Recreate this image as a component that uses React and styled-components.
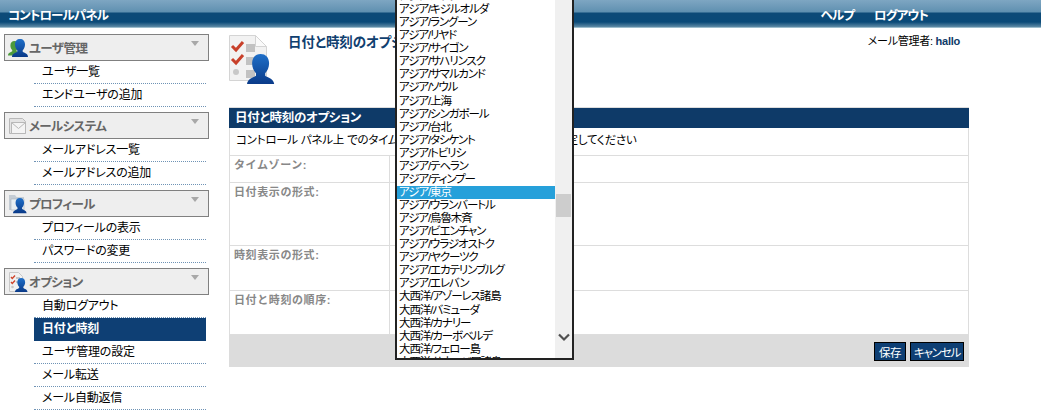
import React from 'react';
import styled, { createGlobalStyle } from 'styled-components';

const GlobalStyle = createGlobalStyle`
  html, body {
    margin: 0;
    padding: 0;
    background: #fff;
    overflow: hidden;
  }
  body {
    font-family: "Liberation Sans", "Noto Sans CJK JP", sans-serif;
    font-size: 12px;
    color: #000;
  }
`

const Page = styled.div`
  position: relative;
  width: 1041px;
  height: 416px;
  overflow: hidden;
`

const TopBar = styled.header`
  height: 28px;
  display: flex;
  justify-content: space-between;
  align-items: center;
  padding: 0 113px 0 8px;
  color: #fff;
  font-weight: bold;
  font-size: 12.5px;
  letter-spacing: -0.9px;
  font-feature-settings: "palt";
  background: linear-gradient(to bottom, #7ea6c2 0, #5f90b0 12px, #0c4a78 13px, #0a4a78 22px, #5f8ba6 27px, #d8eef2 28px);
`

const TopNav = styled.nav`
  display: flex;
  gap: 20px;
`

const Body = styled.div`
  display: flex;
  align-items: flex-start;
`

const Sidebar = styled.aside`
  width: 205px;
  margin: 6px 0 0 4px;
  display: flex;
  flex-direction: column;
  gap: 5px;
`

const GroupHead = styled.div`
  height: 25px;
  border: 1px solid #808080;
  background: #eee;
  display: flex;
  align-items: center;
  gap: 1px;
  padding: 0 8px 0 3px;
  color: #666;
  font-weight: bold;
  font-size: 12.5px;
  letter-spacing: -0.6px;
  font-feature-settings: "palt";
`

const GroupName = styled.span`
  flex: 1;
`

const Caret = styled.span`
  width: 0;
  height: 0;
  margin: -9px 1px 0 0;
  border-left: 4px solid transparent;
  border-right: 4px solid transparent;
  border-top: 5px solid #a8a8a8;
`

const MenuList = styled.ul`
  list-style: none;
  margin: 0 0 0 30px;
  padding: 0;
  width: 172px;
`

const MenuItem = styled.li`
  height: 22px;
  line-height: 22px;
  padding-left: 8px;
  font-size: 12px;
  letter-spacing: -0.2px;
  font-feature-settings: "palt";
  border-bottom: 1px dotted ${p => (p.$active ? '#0e3f74' : '#6f93b5')};
  ${p => p.$active && `
    background: #0e3f74;
    color: #fff;
    font-weight: bold;
  `}
`

const Main = styled.main`
  width: 740px;
  margin-left: 20px;
`

const TitleRow = styled.div`
  height: 79px;
  display: flex;
  padding-top: 6px;
  box-sizing: border-box;
`

const TitleIcon = styled.svg`
  width: 50px;
  height: 50px;
  flex: none;
`

const Title = styled.h1`
  flex: 1;
  margin: 0 0 0 9px;
  color: #10406f;
  font-size: 13.5px;
  line-height: 17px;
  font-weight: bold;
  letter-spacing: -0.1px;
  font-feature-settings: "palt";
`

const AdminInfo = styled.div`
  margin: 0 9px 0 0;
  font-size: 11px;
  line-height: 14px;
  letter-spacing: -0.25px;
  font-feature-settings: "palt";
  b {
    color: #0e3a68;
  }
`

const Panel = styled.section`
  border-top: 1px solid #ddd;
`

const PanelHead = styled.h2`
  margin: 0;
  height: 20px;
  line-height: 20px;
  padding-left: 6px;
  background: #0e3a68;
  color: #fff;
  font-size: 12.5px;
  font-weight: bold;
  letter-spacing: -0.3px;
  font-feature-settings: "palt";
`

const PanelNote = styled.p`
  margin: 0;
  height: 27px;
  line-height: 25px;
  padding-left: 6px;
  font-size: 11.5px;
  letter-spacing: -0.23px;
  font-feature-settings: "palt";
  border: solid #ddd;
  border-width: 0 1px 1px;
`

const FormRow = styled.div`
  display: grid;
  grid-template-columns: 160px 1fr;
  height: ${p => p.$height}px;
  box-sizing: border-box;
  border: solid #ddd;
  border-width: 0 1px 1px;
`

const FormLabel = styled.label`
  padding: 2px 0 0 4px;
  color: #888;
  font-size: 11px;
  line-height: 14px;
  font-weight: bold;
  letter-spacing: 0.6px;
  border-right: 1px solid #ddd;
`

const FormFooter = styled.div`
  height: 32px;
  background: #dcdcdc;
  display: flex;
  justify-content: flex-end;
  align-items: center;
  gap: 4px;
  padding-right: 5px;
`

const SubmitButton = styled.button`
  width: ${p => p.$width}px;
  height: 19px;
  padding: 0;
  margin-top: 1px;
  border: 1px solid #000;
  background: #0e3f74;
  color: #fff;
  font: 11.5px "Liberation Sans", "Noto Sans CJK JP", sans-serif;
  font-feature-settings: "palt";
  letter-spacing: ${p => p.$tracking}px;
  box-sizing: border-box;
`

const ZoneDropdown = styled.div`
  position: absolute;
  left: 395px;
  top: -14px;
  width: 179px;
  height: 374px;
  box-sizing: border-box;
  border: 2px solid #222;
  background: #fff;
  display: flex;
  overflow: hidden;
`

const ZoneList = styled.ul`
  list-style: none;
  margin: 2px 0 0;
  padding: 0;
  flex: 1;
  overflow: hidden;
`

const ZoneOption = styled.li`
  height: 13.07px;
  line-height: 13px;
  padding-left: 2px;
  font-size: 11.5px;
  letter-spacing: -1.1px;
  white-space: nowrap;
  font-feature-settings: "palt";
  ${p => p.$selected && `
    background: #26a0da;
    color: #fff;
  `}
`

const ScrollTrack = styled.div`
  position: relative;
  width: 17px;
  flex: none;
  background: #f0f0f0;
`

const ScrollThumb = styled.div`
  position: absolute;
  left: 1px;
  right: 1px;
  top: 206px;
  height: 23px;
  background: #cdcdcd;
`

const ScrollArrow = styled.svg`
  position: absolute;
  left: 3px;
  bottom: 16px;
  width: 12px;
  height: 9px;
`

const Person = ({ x = 0, y = 0, s = 1, fill = 'url(#personBlue)' }) => (
  <g transform={`translate(${x} ${y}) scale(${s})`} fill={fill}>
    <path d="M8 0c3 0 5 2 5 5.500 0 2.500-1 4.500-2.300 5.800v1.500c1.500 1.200 5.300 1.700 5.300 5.200H0c0-3.500 3.800-4 5.300-5.200v-1.500C4 10 3 8 3 5.500 3 2 5 0 8 0z" />
  </g>
)

const IconDefs = () => (
  <defs>
    <linearGradient id="personBlue" x1="0" y1="0" x2="0" y2="1">
      <stop offset="0" stopColor="#1f6fc8" />
      <stop offset="1" stopColor="#0a3a88" />
    </linearGradient>
  </defs>
)

const SmallIcon = styled.svg`
  width: 20px;
  height: 20px;
  flex: none;
`

const UsersIcon = () => (
  <SmallIcon viewBox="0 0 20 20">
    <IconDefs />
    <Person x={0} y={3} s={0.8} fill="#4d9a3c" />
    <Person x={4} y={1} s={1} />
  </SmallIcon>
)

const MailIcon = () => (
  <SmallIcon viewBox="0 0 20 20" fill="#f4f4f4" stroke="#b8b8b8">
    <path d="M1.500 2.500h13l3 3v12h-16z" fill="#e4e4e4" />
    <path d="M3.500 6.500h14v11h-14z" />
    <path d="M3.500 6.500l7 6 7-6" fill="none" />
  </SmallIcon>
)

const ProfileIcon = () => (
  <SmallIcon viewBox="0 0 20 20">
    <IconDefs />
    <path d="M1 1h6l1.500 2H16v13H1z" fill="#c4ccd4" />
    <path d="M3 5h13v11H3z" fill="#e8eef2" stroke="#a8b4bc" strokeWidth=".6" />
    <Person x={5} y={4} s={0.85} />
  </SmallIcon>
)

const OptionsIcon = () => (
  <SmallIcon viewBox="0 0 20 20">
    <IconDefs />
    <path d="M1.500.5h9l4 4v15h-13z" fill="#f1f1f1" stroke="#c8c8c8" />
    <path d="M3 5l1.300 1.500L7 3.500M3 10l1.300 1.500L7 8.500" fill="none" stroke="#d0452c" strokeWidth="1.400" />
    <path d="M8 6h4M8 10h3" stroke="#b8b8b8" strokeWidth="1.500" />
    <circle cx="4.500" cy="15" r="1.300" fill="#c8c8c8" />
    <Person x={7} y={6} s={0.78} />
  </SmallIcon>
)

const SettingsIllustration = () => (
  <TitleIcon viewBox="0 0 50 50">
    <IconDefs />
    <path d="M.5 1.500h26l11 11v34H.5z" fill="#f2f2f2" stroke="#d4d4d4" />
    <path d="M26.500 1.500v11h11z" fill="#fafafa" stroke="#d4d4d4" />
    <path d="M3 12l4 4 7-8M3 25l4 4 7-8" fill="none" stroke="#c8402a" strokeWidth="3" />
    <circle cx="7" cy="38" r="3" fill="#c8c8c8" />
    <path d="M17 10h9v8h-9zM17 23h9v8h-9zM17 36h9v8h-9z" fill="#c2c2c2" />
    <Person x={18} y={20} s={1.7} />
  </TitleIcon>
)

const menuGroups = [
  { name: 'ユーザ管理', icon: <UsersIcon />, items: ['ユーザ一覧', 'エンドユーザの追加'] },
  { name: 'メールシステム', icon: <MailIcon />, items: ['メールアドレス一覧', 'メールアドレスの追加'] },
  { name: 'プロフィール', icon: <ProfileIcon />, items: ['プロフィールの表示', 'パスワードの変更'] },
  {
    name: 'オプション',
    icon: <OptionsIcon />,
    items: ['自動ログアウト', '日付と時刻', 'ユーザ管理の設定', 'メール転送', 'メール自動返信'],
  },
]

const formRows = [
  { label: 'タイムゾーン:', height: 27 },
  { label: '日付表示の形式:', height: 63 },
  { label: '時刻表示の形式:', height: 45 },
  { label: '日付と時刻の順序:', height: 44 },
]

const zones = [
  'アジア/カラチ',
  'アジア/キジルオルダ',
  'アジア/ラングーン',
  'アジア/リヤド',
  'アジア/サイゴン',
  'アジア/サハリンスク',
  'アジア/サマルカンド',
  'アジア/ソウル',
  'アジア/上海',
  'アジア/シンガポール',
  'アジア/台北',
  'アジア/タシケント',
  'アジア/トビリシ',
  'アジア/テヘラン',
  'アジア/ティンプー',
  'アジア/東京',
  'アジア/ウランバートル',
  'アジア/烏魯木斉',
  'アジア/ビエンチャン',
  'アジア/ウラジオストク',
  'アジア/ヤクーツク',
  'アジア/エカテリンブルグ',
  'アジア/エレバン',
  '大西洋/アゾーレス諸島',
  '大西洋/バミューダ',
  '大西洋/カナリー',
  '大西洋/カーボベルデ',
  '大西洋/フェロー島',
  '大西洋/サウスジア諸島',
]

export default function App() {
  return (
    <Page>
      <GlobalStyle />
      <TopBar>
        <span>コントロールパネル</span>
        <TopNav>
          <span>ヘルプ</span>
          <span>ログアウト</span>
        </TopNav>
      </TopBar>
      <Body>
        <Sidebar>
          {menuGroups.map(group => (
            <div key={group.name}>
              <GroupHead>
                {group.icon}
                <GroupName>{group.name}</GroupName>
                <Caret />
              </GroupHead>
              <MenuList>
                {group.items.map(item => (
                  <MenuItem key={item} $active={item === '日付と時刻'}>{item}</MenuItem>
                ))}
              </MenuList>
            </div>
          ))}
        </Sidebar>
        <Main>
          <TitleRow>
            <SettingsIllustration />
            <Title>日付と時刻のオプション</Title>
            <AdminInfo>メール管理者: <b>hallo</b></AdminInfo>
          </TitleRow>
          <Panel>
            <PanelHead>日付と時刻のオプション</PanelHead>
            <PanelNote>コントロール パネル上 でのタイムゾーン、日付と時刻の表示形式を設定してください</PanelNote>
            {formRows.map(row => (
              <FormRow key={row.label} $height={row.height}>
                <FormLabel>{row.label}</FormLabel>
                <div />
              </FormRow>
            ))}
            <FormFooter>
              <SubmitButton $width={32} $tracking={-0.5}>保存</SubmitButton>
              <SubmitButton $width={54} $tracking={-1.2}>キャンセル</SubmitButton>
            </FormFooter>
          </Panel>
        </Main>
      </Body>
      <ZoneDropdown>
        <ZoneList>
          {zones.map(zone => (
            <ZoneOption key={zone} $selected={zone === 'アジア/東京'}>{zone}</ZoneOption>
          ))}
        </ZoneList>
        <ScrollTrack>
          <ScrollThumb />
          <ScrollArrow viewBox="0 0 12 9">
            <path d="M1 1.500l5 5 5-5" fill="none" stroke="#505050" strokeWidth="2.200" />
          </ScrollArrow>
        </ScrollTrack>
      </ZoneDropdown>
    </Page>
  )
}
